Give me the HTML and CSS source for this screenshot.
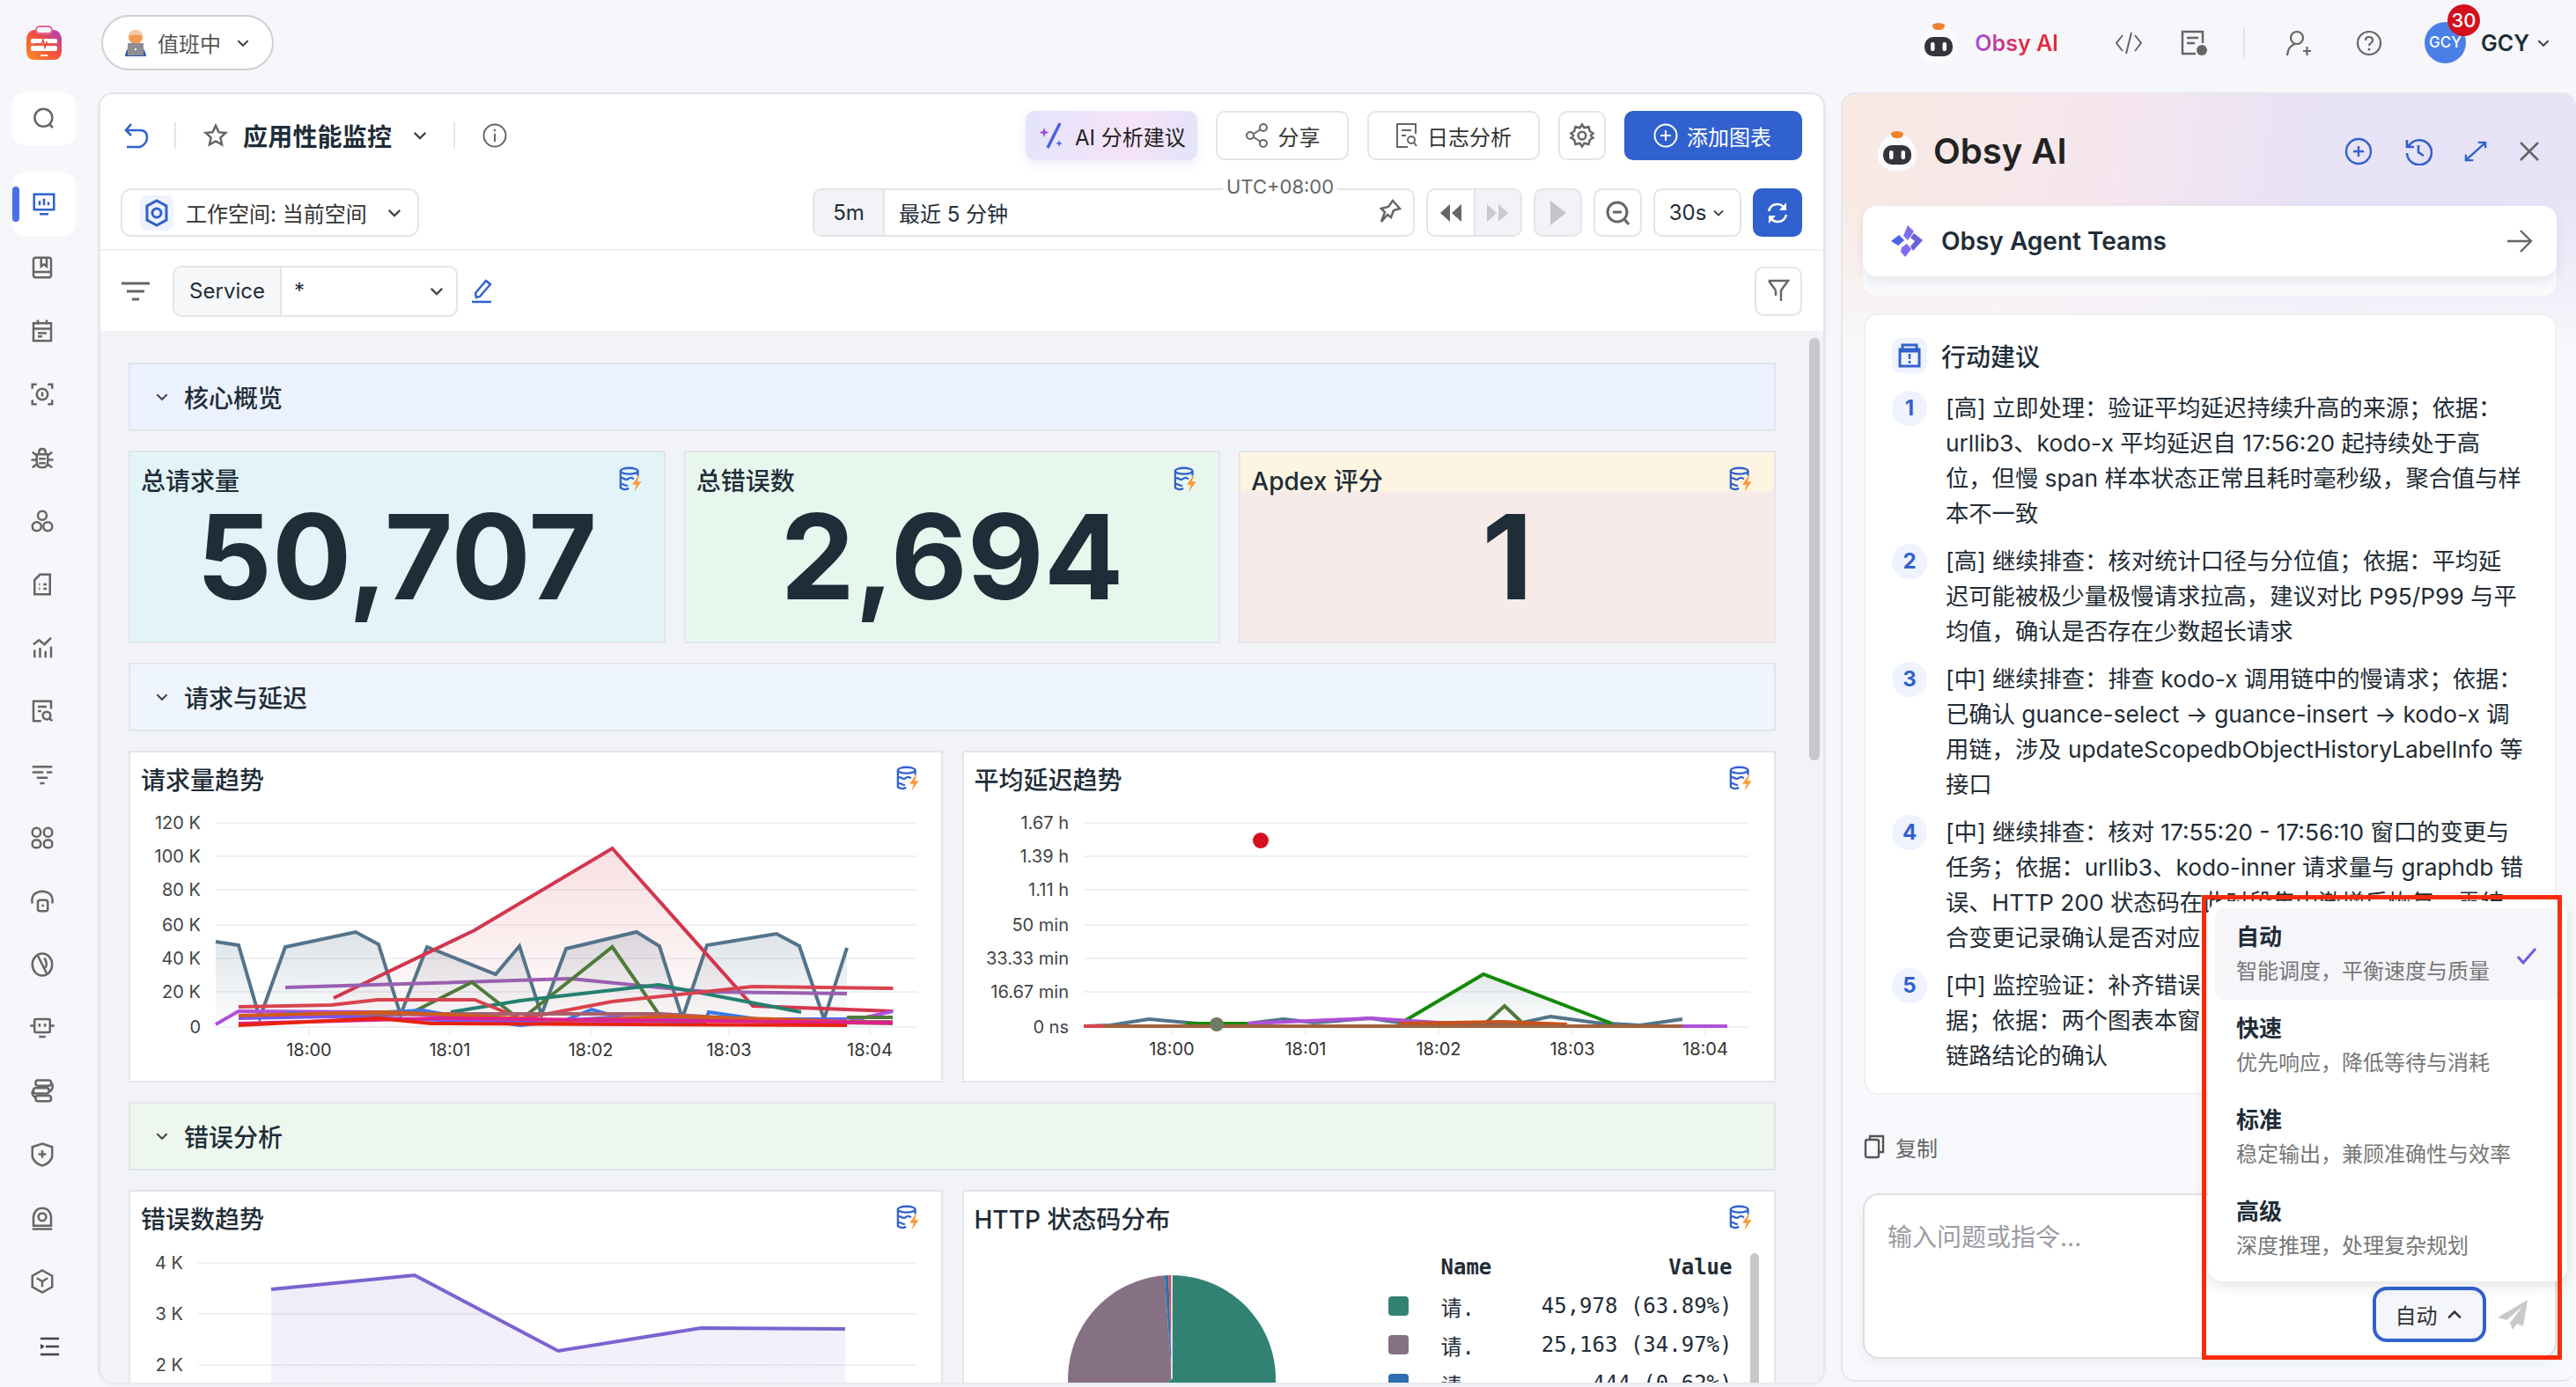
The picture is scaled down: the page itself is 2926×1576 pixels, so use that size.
FILE: index.html
```html
<!DOCTYPE html>
<html lang="zh">
<head>
  <meta charset="UTF-8" />
  <title>应用性能监控</title>
  <link rel="stylesheet" href="styles.css">
</head>
<body>
  <svg class="sprites" width="0" height="0">
    <defs>
      <linearGradient id="logoGrad" x1="0" y1="1" x2="1" y2="0">
        <stop offset="0" stop-color="#ff8a1f"/><stop offset=".55" stop-color="#f0503c"/><stop offset="1" stop-color="#a63fc9"/>
      </linearGradient>
      <symbol id="chev" viewBox="0 0 16 16"><path d="M3 5.500l5 5 5-5" fill="none" stroke="currentColor" stroke-width="1.800"/></symbol>
      <symbol id="ds" viewBox="0 0 26 26">
        <ellipse cx="11" cy="4.500" rx="8.500" ry="3" fill="none" stroke="#3161cf" stroke-width="2"/>
        <path d="M2.500 4.500V21q4 3 8 .5M19.500 4.500V9M2.500 12c3-2.500 4 2.500 7 .5s4-1.500 6 0M2.500 18c3-2.500 4 2.500 7 .5" fill="none" stroke="#3161cf" stroke-width="2"/>
        <path d="M20 9l-6 9h4l-2 7 7-10h-4l2-6z" fill="#fb9a3c"/>
      </symbol>
      <symbol id="mascot" viewBox="0 0 48 48">
        <path d="M24 4C11 4 2 16 2 30c0 11 10 16 22 16s22-5 22-16C46 16 37 4 24 4z" fill="#fbfbfd"/>
        <path d="M17 3q7-4 14 0c0 5-3 6-7 6s-7-1-7-6z" fill="#f2812c"/>
        <rect x="8" y="17" width="32" height="22" rx="10" fill="#34343a"/>
        <rect x="15" y="23" width="4.500" height="10" rx="2" fill="#fff"/>
        <rect x="28.500" y="23" width="4.500" height="10" rx="2" fill="#fff"/>
      </symbol>
    </defs>
  </svg>

  <header class="topbar">
    <div class="top-left">
      <svg class="logo" width="40" height="40" viewBox="0 0 40 40">
        <path d="M8 5h24q8 2 8 12v12q0 10-10 10H10Q0 39 0 29V17Q0 7 8 5z" fill="url(#logoGrad)"/>
        <rect x="11" y="1" width="18" height="8" rx="4" fill="#f7f7fb" stroke="#e8669a" stroke-width="2"/>
        <rect x="5" y="15" width="30" height="5.500" rx="2" fill="#fff"/>
        <rect x="5" y="23" width="30" height="6" rx="2" fill="#fff"/>
        <path d="M8 21h9l2-5 2 9 2-6 1 2h9" fill="none" stroke="#e9483b" stroke-width="1.500"/>
        <rect x="16" y="33" width="8" height="2" fill="#fff"/>
      </svg>
      <button class="status-pill">
        <svg width="30" height="30" viewBox="0 0 30 30">
          <circle cx="15" cy="8" r="8" fill="#f59a52"/>
          <path d="M7 7q2-7 8-7t8 7q-8-3-16 0z" fill="#f4c9a6"/>
          <path d="M3 30q1-9 6-10h12q5 1 6 10z" fill="#3556b0"/>
          <rect x="6" y="15" width="18" height="14" fill="#8e8e92"/>
          <circle cx="15" cy="22" r="1.300" fill="#eee"/>
        </svg>
        <span>值班中</span>
        <svg class="chev pill-chev" width="18" height="18"><use href="#chev"/></svg>
      </button>
    </div>
    <div class="top-right">
      <svg width="48" height="48"><use href="#mascot"/></svg>
      <span class="obsy-link">Obsy AI</span>
      <svg class="top-icon code-icon" width="32" height="28" viewBox="0 0 32 28"><path d="M9 5L2 14l7 9M23 5l7 9-7 9M19 2l-6 24" fill="none" stroke="#666" stroke-width="2"/></svg>
      <svg class="top-icon" width="32" height="30" viewBox="0 0 32 30"><path d="M18 27H3V2h23v13" fill="none" stroke="#666" stroke-width="2.500"/><path d="M8 9h13M8 15h9" stroke="#666" stroke-width="2.500"/><circle cx="25" cy="23" r="6" fill="#666"/></svg>
      <span class="top-divider"></span>
      <svg class="top-icon" width="30" height="30" viewBox="0 0 30 30"><circle cx="13" cy="9" r="7" fill="none" stroke="#666" stroke-width="2.200"/><path d="M2 29q1-11 9-13M20 24h9M24.500 19v10" fill="none" stroke="#666" stroke-width="2.200"/></svg>
      <svg class="top-icon help-icon" width="30" height="30" viewBox="0 0 30 30"><circle cx="15" cy="15" r="13" fill="none" stroke="#666" stroke-width="2.200"/><path d="M11 12q0-4 4-4t4 4q0 2-2 3t-2 3" fill="none" stroke="#666" stroke-width="2.200"/><circle cx="15" cy="22" r="1.500" fill="#666"/></svg>
      <div class="avatar">GCY<span class="badge">30</span></div>
      <span class="user-name">GCY</span>
      <svg class="chev user-chev" width="18" height="18"><use href="#chev"/></svg>
    </div>
  </header>

  <div class="workspace">
    <nav class="sidebar">
      <div class="nav-search">
        <svg width="30" height="30" viewBox="0 0 24 24"><circle cx="11.500" cy="11" r="8" class="ic"/><path d="M17 17l3 3" class="ic"/></svg>
      </div>
      <div class="nav-item active">
        <svg width="30" height="30" viewBox="0 0 24 24"><rect x="3" y="3" width="18" height="14" fill="none" stroke="#3161cf" stroke-width="2"/><path d="M8 9v4M12 7v6M16 10v3M8 21h8" stroke="#3161cf" stroke-width="2"/></svg>
      </div>
      <div class="nav-item"><svg width="30" height="30" viewBox="0 0 24 24"><rect x="4" y="3" width="16" height="18" rx="2" class="ic"/><path d="M4 16h16M11 3v8l2.500-2 2.500 2V3" class="ic"/></svg></div>
      <div class="nav-item"><svg width="30" height="30" viewBox="0 0 24 24"><rect x="4" y="5" width="16" height="16" class="ic"/><path d="M4 10h16M8 2v4M16 2v4M8 14h8M8 17h4" class="ic"/></svg></div>
      <div class="nav-item"><svg width="30" height="30" viewBox="0 0 24 24"><path d="M3 7V3h4M17 3h4v4M21 17v4h-4M7 21H3v-4" class="ic"/><circle cx="12" cy="12" r="5" class="ic"/><path d="M12 10v4" class="ic"/></svg></div>
      <div class="nav-item"><svg width="30" height="30" viewBox="0 0 24 24"><path d="M7 9h10v7q0 5-5 5t-5-5zM9 9V7q0-3 3-3t3 3v2M3 7l4 3M21 7l-4 3M2 14h5M17 14h5M3 21l4-3M21 21l-4-3M9 13h6M9 17h6" class="ic"/></svg></div>
      <div class="nav-item"><svg width="30" height="30" viewBox="0 0 24 24"><circle cx="12" cy="7" r="4" class="ic"/><circle cx="7" cy="17" r="4" class="ic"/><circle cx="17" cy="17" r="4" class="ic"/></svg></div>
      <div class="nav-item"><svg width="30" height="30" viewBox="0 0 24 24"><path d="M5 8l5-5h9v18H5z" class="ic"/><path d="M9 12h1M13 12h3M9 16h1M13 16h3" class="ic"/></svg></div>
      <div class="nav-item"><svg width="30" height="30" viewBox="0 0 24 24"><path d="M5 14v7M10 12v9M15 15v6M20 11v10M4 9l5-4 5 4 6-6" class="ic"/></svg></div>
      <div class="nav-item"><svg width="30" height="30" viewBox="0 0 24 24"><path d="M20 10V3H4v18h7M8 8h8M8 12h3" class="ic"/><circle cx="16" cy="16" r="3.500" class="ic"/><path d="M18.500 18.500L21 21" class="ic"/></svg></div>
      <div class="nav-item"><svg width="30" height="30" viewBox="0 0 24 24"><path d="M3 5h18M3 10h10M16 10h5M7 15h10M10 20h4" class="ic"/></svg></div>
      <div class="nav-item"><svg width="30" height="30" viewBox="0 0 24 24"><rect x="3" y="3" width="7.500" height="8" rx="3.700" class="ic"/><rect x="13.500" y="3" width="7.500" height="8" rx="3.700" class="ic"/><rect x="3" y="14" width="7.500" height="7" rx="3" class="ic"/><rect x="13.500" y="14" width="7.500" height="7" rx="3" class="ic"/></svg></div>
      <div class="nav-item"><svg width="30" height="30" viewBox="0 0 24 24"><path d="M3 14q-2-10 9-11 11 1 9 11" class="ic"/><rect x="8" y="11" width="9" height="10" rx="2" class="ic"/><path d="M12.500 15v2" class="ic"/></svg></div>
      <div class="nav-item"><svg width="30" height="30" viewBox="0 0 24 24"><ellipse cx="12" cy="12" rx="9" ry="10" class="ic"/><path d="M8 4l8 16M14 6q3 5 1 9" class="ic"/></svg></div>
      <div class="nav-item"><svg width="30" height="30" viewBox="0 0 24 24"><rect x="5" y="4" width="14" height="12" rx="1" class="ic"/><path d="M1 10h4M19 10h4M9 20h6M9.500 8v3M14.500 8v3" class="ic"/></svg></div>
      <div class="nav-item"><svg width="30" height="30" viewBox="0 0 24 24"><rect x="6" y="2" width="14" height="5" rx="2" class="ic"/><rect x="4" y="9" width="14" height="5" rx="2" class="ic"/><rect x="6" y="16" width="14" height="5" rx="2" class="ic"/><path d="M20 4.500q3 2 0 7h-2M4 11q-3 3 2 7" class="ic"/></svg></div>
      <div class="nav-item"><svg width="30" height="30" viewBox="0 0 24 24"><path d="M12 2l9 3v9q-2 6-9 8-7-2-9-8V5z" class="ic"/><path d="M12 8v7M8.500 11.500h7" class="ic"/></svg></div>
      <div class="nav-item"><svg width="30" height="30" viewBox="0 0 24 24"><path d="M4 19v-8q1-8 8-8t8 8v8z" class="ic"/><circle cx="12" cy="11" r="3.500" class="ic"/><path d="M3 22h18" class="ic"/></svg></div>
      <div class="nav-item"><svg width="30" height="30" viewBox="0 0 24 24"><path d="M12 2l9 5v10l-9 5-9-5V7z" class="ic"/><path d="M7 9l5 3 5-3M12 12v5" class="ic"/></svg></div>
      <svg class="nav-collapse" width="24" height="24" viewBox="0 0 24 24"><path d="M2 3h21M8 12h15M2 21h21" stroke="#444" stroke-width="2.400"/><path d="M2 9l5 3-5 3z" fill="#444"/></svg>
    </nav>

    <main class="board">
      <div class="board-head">
        <div class="head-row title-row">
          <div class="title-left">
            <svg width="30" height="30" viewBox="0 0 30 30"><path d="M9 2L3 9l6 6M3 9h16q8 0 8 8t-8 11H4" fill="none" stroke="#3161cf" stroke-width="2.500"/></svg>
            <span class="vline"></span>
            <svg class="star" width="30" height="30" viewBox="0 0 24 24"><path d="M12 3l2.700 5.900 6.300.7-4.700 4.300 1.300 6.400L12 17.100l-5.600 3.200 1.300-6.400L3 9.600l6.300-.7z" class="ic"/></svg>
            <h1>应用性能监控</h1>
            <svg class="chev" width="20" height="20"><use href="#chev"/></svg>
            <span class="vline"></span>
            <svg width="28" height="28" viewBox="0 0 28 28"><circle cx="14" cy="14" r="12.500" fill="none" stroke="#666" stroke-width="2"/><path d="M14 12v9" stroke="#666" stroke-width="2"/><circle cx="14" cy="8" r="1.300" fill="#666"/></svg>
          </div>
          <div class="title-actions">
            <button class="btn ai-btn">
              <svg width="30" height="34" viewBox="0 0 30 34"><path d="M23 3L9 31" stroke="#4d5fe0" stroke-width="3.500"/><path d="M5 8l1.500 4 4 1.500-4 1.500L5 19l-1.500-4-4-1.500 4-1.500z" fill="#a24fd8"/><path d="M22 22l1 3 3 1-3 1-1 3-1-3-3-1 3-1z" fill="#4d5fe0"/></svg>
              AI 分析建议
            </button>
            <button class="btn share-btn">
              <svg width="28" height="30" viewBox="0 0 28 30"><circle cx="21" cy="6" r="4" class="ic"/><circle cx="6" cy="15" r="4" class="ic"/><circle cx="21" cy="24" r="4" class="ic"/><path d="M10 13l8-5M10 17l8 5" class="ic"/></svg>
              分享
            </button>
            <button class="btn log-btn">
              <svg width="26" height="32" viewBox="0 0 26 32"><path d="M14 29H2V3h21v11M7 10h11M7 16h5" class="ic"/><circle cx="18" cy="21" r="4" class="ic"/><path d="M21 24l3 4" class="ic"/></svg>
              日志分析
            </button>
            <button class="btn icon-btn">
              <svg width="30" height="30" viewBox="0 0 24 24"><path d="M12 2l2 3 4-1 1 4 3 2-2 2 2 2-3 2-1 4-4-1-2 3-2-3-4 1-1-4-3-2 2-2-2-2 3-2 1-4 4 1z" class="ic"/><circle cx="12" cy="12" r="3.500" class="ic"/></svg>
            </button>
            <button class="btn primary-btn">
              <svg width="28" height="28" viewBox="0 0 28 28"><circle cx="14" cy="14" r="12.500" fill="none" stroke="#fff" stroke-width="2"/><path d="M14 8v12M8 14h12" stroke="#fff" stroke-width="2"/></svg>
              添加图表
            </button>
          </div>
        </div>

        <div class="head-row time-row">
          <button class="ws-select">
            <span class="ws-icon">
              <svg width="28" height="32" viewBox="0 0 28 32"><path d="M14 2l11 6v16l-11 6-11-6V8z" fill="none" stroke="#3161cf" stroke-width="3"/><circle cx="14" cy="16" r="5" fill="none" stroke="#3161cf" stroke-width="3"/></svg>
            </span>
            <span>工作空间: 当前空间</span>
            <svg class="chev" width="20" height="20"><use href="#chev"/></svg>
          </button>
          <div class="time-tools">
            <div class="time-range">
              <span class="time-quick">5m</span>
              <span class="time-text">最近 5 分钟</span>
              <span class="utc">UTC+08:00</span>
              <svg width="30" height="32" viewBox="0 0 30 32"><path d="M19 2l8 9-7 2-3 8-4-3-7 8 4-11-4-4 8-2z" fill="none" stroke="#666" stroke-width="2.500"/></svg>
            </div>
            <div class="tool-group">
              <span class="tool"><svg width="26" height="22" viewBox="0 0 26 22"><path d="M12 1L1 11l11 10zM25 1L14 11l11 10z" fill="#666"/></svg></span>
              <span class="tool off"><svg width="26" height="22" viewBox="0 0 26 22"><path d="M1 1l11 10L1 21zM14 1l11 10-11 10z" fill="#c9cacd"/></svg></span>
            </div>
            <span class="tool-box off"><svg width="20" height="30" viewBox="0 0 20 30"><path d="M1 1l18 14L1 29z" fill="#c4c5c8"/></svg></span>
            <span class="tool-box"><svg width="30" height="32" viewBox="0 0 30 32"><circle cx="14" cy="15" r="11" fill="none" stroke="#666" stroke-width="3"/><path d="M9 15h10M22 23l5 6" stroke="#666" stroke-width="3"/></svg></span>
            <span class="tool-box interval">30s <svg class="chev" width="16" height="16"><use href="#chev"/></svg></span>
            <span class="refresh"><svg width="26" height="28" viewBox="0 0 26 28"><path d="M3 12q2-8 10-8 5 0 8 5M23 16q-2 8-10 8-5 0-8-5" fill="none" stroke="#fff" stroke-width="2.600"/><path d="M23 2v9h-8zM3 26v-9h8z" fill="#fff"/></svg></span>
          </div>
        </div>

        <div class="filter-row">
          <svg width="34" height="24" viewBox="0 0 34 24"><path d="M1 3h32M7 12h20M13 21h8" stroke="#666" stroke-width="3"/></svg>
          <div class="filter-group">
            <span class="filter-key">Service</span>
            <span class="filter-val">*</span>
            <svg class="chev" width="20" height="20"><use href="#chev"/></svg>
          </div>
          <svg width="26" height="28" viewBox="0 0 26 28"><path d="M7 21l-1-5L18 2l5 4-12 14zM2 26h22" fill="none" stroke="#3161cf" stroke-width="2.500"/></svg>
          <button class="btn icon-btn funnel">
            <svg width="26" height="30" viewBox="0 0 26 30"><path d="M2 3h22l-8 11v12M10 14v6M2 3l8 11" fill="none" stroke="#666" stroke-width="2.400"/></svg>
          </button>
        </div>
      </div>

      <div class="dash">
        <section class="group-bar blue-bar"><svg class="chev" width="18" height="18"><use href="#chev"/></svg>核心概览</section>

        <div class="stat-row">
          <article class="stat-card stat-cyan">
            <div class="card-head"><h3>总请求量</h3><svg width="30" height="30"><use href="#ds"/></svg></div>
            <div class="stat-value">50,707</div>
          </article>
          <article class="stat-card stat-green">
            <div class="card-head"><h3>总错误数</h3><svg width="30" height="30"><use href="#ds"/></svg></div>
            <div class="stat-value">2,694</div>
          </article>
          <article class="stat-card stat-warn">
            <div class="card-head"><h3>Apdex 评分</h3><svg width="30" height="30"><use href="#ds"/></svg></div>
            <div class="stat-value">1</div>
          </article>
        </div>

        <section class="group-bar blue-bar light"><svg class="chev" width="18" height="18"><use href="#chev"/></svg>请求与延迟</section>

        <div class="chart-row">
          <article class="chart-card">
            <div class="card-head"><h3>请求量趋势</h3><svg width="30" height="30"><use href="#ds"/></svg></div>
            <svg class="plot" viewBox="148 915 920 313" width="920" height="313">
              <defs>
                <linearGradient id="fillRed" x1="0" y1="0" x2="0" y2="1"><stop offset="0" stop-color="#d9434e" stop-opacity=".16"/><stop offset="1" stop-color="#d9434e" stop-opacity=".02"/></linearGradient>
                <linearGradient id="fillSlate" x1="0" y1="0" x2="0" y2="1"><stop offset="0" stop-color="#53748a" stop-opacity=".2"/><stop offset="1" stop-color="#53748a" stop-opacity=".01"/></linearGradient>
              </defs>
              <g class="grid"><path d="M245 935H1042M245 973H1042M245 1011H1042M245 1051H1042M245 1089H1042M245 1127H1042M245 1167H1042"/><path d="M351 1167v9M511 1167v9M671 1167v9M828 1167v9M988 1167v9"/></g>
              <g class="axis-y">
                <text x="228" y="942">120 K</text><text x="228" y="980">100 K</text><text x="228" y="1018">80 K</text><text x="228" y="1058">60 K</text><text x="228" y="1096">40 K</text><text x="228" y="1134">20 K</text><text x="228" y="1174">0</text>
              </g>
              <g class="axis-x">
                <text x="351" y="1200">18:00</text><text x="511" y="1200">18:01</text><text x="671" y="1200">18:02</text><text x="828" y="1200">18:03</text><text x="988" y="1200">18:04</text>
              </g>
              <path d="M379 1134L539 1057 695.500 964 855 1143 1014.500 1149V1167H379z" fill="url(#fillRed)"/>
              <path d="M245 1070L271 1074 295 1157 324 1076 404 1059 430 1073 455 1153 485 1076 563 1107 590 1075 615 1153 643 1078 723 1059 749 1075 775 1157 803 1074 882 1061 908 1075 936 1158 962 1077V1167H245z" fill="url(#fillSlate)"/>
              <g class="series">
                <polyline stroke="#53748a" points="245,1070 271,1074 295,1157 324,1076 404,1059 430,1073 455,1153 485,1076 563,1107 590,1075 615,1153 643,1078 723,1059 749,1075 775,1157 803,1074 882,1061 908,1075 936,1158 962,1077"/>
                <polyline stroke="#d4354f" points="379,1134 539,1057 695.500,964 855,1143 1014.500,1149"/>
                <polyline stroke="#9a5fb0" points="324,1122 491,1117 648,1112 748,1122 805,1127 962,1129"/>
                <polyline stroke="#4f7a3a" points="465,1152 536,1116 586,1155"/>
                <polyline stroke="#4f7a3a" points="596,1155 695.500,1076 748,1152 774,1157"/>
                <polyline stroke="#23806f" points="512,1150 591,1137 748,1119 910,1150"/>
                <polyline stroke="#d9434e" points="271,1144 376,1142 429,1136 539,1136 591,1157 622,1152 695.500,1138 800,1127 855,1121 1014.500,1123"/>
                <polyline stroke="#b04fd8" points="245,1164 271,1149 430,1150 591,1160 780,1160 962,1161 1014,1149"/>
                <polyline stroke="#3a78e8" points="325,1151 376,1153 480,1148 520,1155 591,1165 640,1160 672,1147 710,1158 800,1163 805,1150 860,1158 962,1158"/>
                <polyline stroke="#4f7a3a" points="962,1156 1014,1156"/>
                <polyline stroke="#8a7a5a" stroke-width="6" points="962,1161 1014,1161"/>
                <polyline stroke="#a85f6a" stroke-width="6" points="271,1156 500,1152 750,1152 900,1161 1014,1163"/>
                <polyline stroke="#7b55f0" stroke-width="6" points="271,1157 376,1155 500,1159 620,1161 695,1156 780,1158 962,1159"/>
                <polyline stroke="#d2591b" stroke-width="6" points="271,1154 440,1150 490,1152 640,1160 760,1155 880,1158 962,1161"/>
                <polyline stroke="#e0208a" stroke-width="6" points="271,1163 500,1157 680,1159 1014,1162"/>
                <polyline stroke="#e8220f" stroke-width="6" points="271,1165 430,1157 490,1163 962,1165"/>
              </g>
            </svg>
          </article>
          <article class="chart-card">
            <div class="card-head"><h3>平均延迟趋势</h3><svg width="30" height="30"><use href="#ds"/></svg></div>
            <svg class="plot" viewBox="1096 915 920 313" width="920" height="313">
              <defs>
                <linearGradient id="fillPeak" x1="0" y1="0" x2="0" y2="1"><stop offset="0" stop-color="#53748a" stop-opacity=".16"/><stop offset="1" stop-color="#53748a" stop-opacity=".02"/></linearGradient>
              </defs>
              <g class="grid"><path d="M1232 935H1988M1232 973H1988M1232 1011H1988M1232 1051H1988M1232 1089H1988M1232 1127H1988M1232 1167H1988"/><path d="M1332 1167v9M1484 1167v9M1635 1167v9M1787 1167v9M1938 1167v9"/></g>
              <g class="axis-y">
                <text x="1215" y="942">1.67 h</text><text x="1215" y="980">1.39 h</text><text x="1215" y="1018">1.11 h</text><text x="1215" y="1058">50 min</text><text x="1215" y="1096">33.33 min</text><text x="1215" y="1134">16.67 min</text><text x="1215" y="1174">0 ns</text>
              </g>
              <g class="axis-x">
                <text x="1332" y="1199">18:00</text><text x="1484" y="1199">18:01</text><text x="1635" y="1199">18:02</text><text x="1787" y="1199">18:03</text><text x="1938" y="1199">18:04</text>
              </g>
              <path d="M1593 1162L1686 1107 1832 1163z" fill="url(#fillPeak)"/>
              <g class="series">
                <polyline stroke="#53748a" points="1232,1166 1262,1165 1306,1158 1361,1163 1418,1163 1459,1158 1494,1162 1558,1157 1590,1162 1686,1163 1730,1162 1762,1155 1813,1162 1864,1165 1912,1158"/>
                <polyline stroke="#138a07" points="1593,1162 1686,1107 1832,1163"/>
                <polyline stroke="#138a07" points="1348,1163 1418,1163"/>
                <polyline stroke="#4f7a3a" points="1689,1162 1710,1143 1730,1162"/>
                <polyline stroke="#b04fd8" points="1418,1163 1558,1157 1635,1162"/>
                <polyline stroke="#b04fd8" stroke-width="6" points="1912,1166 1963,1166"/>
                <polyline stroke="#d9434e" stroke-width="6" points="1232,1166 1256,1166"/>
                <polyline stroke="#c9521a" points="1590,1163 1708,1161 1781,1164"/>
                <polyline stroke="#a0623e" stroke-width="6" points="1256,1166 1912,1166"/>
              </g>
              <circle cx="1433" cy="955" r="9" fill="#d60f1e"/>
              <circle cx="1383" cy="1164" r="8" fill="#6f7a62"/>
            </svg>
          </article>
        </div>

        <section class="group-bar green-bar"><svg class="chev" width="18" height="18"><use href="#chev"/></svg>错误分析</section>

        <div class="chart-row">
          <article class="chart-card">
            <div class="card-head"><h3>错误数趋势</h3><svg width="30" height="30"><use href="#ds"/></svg></div>
            <svg class="plot" viewBox="148 1414 920 313" width="920" height="313">
              <defs>
                <linearGradient id="fillViolet" x1="0" y1="0" x2="0" y2="1"><stop offset="0" stop-color="#7b63d0" stop-opacity=".12"/><stop offset="1" stop-color="#7b63d0" stop-opacity=".04"/></linearGradient>
              </defs>
              <g class="grid"><path d="M225 1435H1041M225 1493H1041M225 1551H1041"/></g>
              <g class="axis-y"><text x="208" y="1442">4 K</text><text x="208" y="1500">3 K</text><text x="208" y="1558">2 K</text></g>
              <path d="M308 1465L471 1449 634 1535 796 1509 960 1510V1728H308z" fill="url(#fillViolet)"/>
              <polyline class="line-one" stroke="#7b63d0" points="308,1465 471,1449 634,1535 796,1509 960,1510"/>
            </svg>
          </article>
          <article class="chart-card">
            <div class="card-head"><h3>HTTP 状态码分布</h3><svg width="30" height="30"><use href="#ds"/></svg></div>
            <div class="pie-body">
              <svg class="pie" viewBox="1094 1414 460 313" width="460" height="313">
                <path d="M1330 1567V1449A118 118 0 1 1 1239.600 1642.800z" fill="#328273"/>
                <path d="M1330 1567L1239.600 1642.800A118 118 0 0 1 1321.800 1449.300z" fill="#857183"/>
                <path d="M1330 1567L1321.800 1449.300A118 118 0 0 1 1326.300 1449.100z" fill="#2f6fb0"/>
                <path d="M1330 1567L1326.300 1449.100A118 118 0 0 1 1330 1449z" fill="#c8505e"/>
                <path d="M1330 1567V1449" stroke="#fff" stroke-width="1.500"/>
              </svg>
              <div class="legend">
                <div class="legend-row legend-head"><i></i><b>Name</b><b class="legend-num">Value</b></div>
                <div class="legend-row"><i class="sw-teal"></i><span>请.</span><span class="legend-num">45,978 (63.89%)</span></div>
                <div class="legend-row"><i class="sw-mauve"></i><span>请.</span><span class="legend-num">25,163 (34.97%)</span></div>
                <div class="legend-row"><i class="sw-blue"></i><span>请.</span><span class="legend-num">444 (0.62%)</span></div>
              </div>
              <span class="legend-bar"></span>
            </div>
          </article>
        </div>
        <span class="dash-scroll"></span>
      </div>
    </main>

    <aside class="assistant">
      <div class="assist-head">
        <svg width="48" height="48"><use href="#mascot"/></svg>
        <h2>Obsy AI</h2>
        <div class="assist-tools">
          <svg width="32" height="32" viewBox="0 0 32 32"><circle cx="16" cy="16" r="14" fill="none" stroke="#3161cf" stroke-width="2.400"/><path d="M16 10v12M10 16h12" stroke="#3161cf" stroke-width="2.400"/></svg>
          <svg width="32" height="32" viewBox="0 0 32 32"><path d="M5 10a14 14 0 1 1-2 8M3 3v8h8M16 9v8l6 4" fill="none" stroke="#3161cf" stroke-width="2.600"/></svg>
          <svg width="26" height="24" viewBox="0 0 28 26"><path d="M17 2h9v7M11 24H2v-7M25 3L3 23" fill="none" stroke="#3161cf" stroke-width="2.600"/></svg>
          <svg width="24" height="24" viewBox="0 0 24 24"><path d="M2 2l20 20M22 2L2 22" stroke="#666" stroke-width="2.600"/></svg>
        </div>
      </div>

      <div class="agent-wrap">
        <div class="agent-card">
          <svg width="38" height="38" viewBox="0 0 38 38"><path d="M20 1l7 7-7 10-5-5z" fill="#7f6cf0"/><path d="M27 10l10 8-11 12-3-5 5-6-5-4z" fill="#6a5fdc"/><path d="M10 12l6 6-7 6-8-5z" fill="#4f63e8"/><path d="M13 26l6-4 5 6-7 9-5-6z" fill="#7f6cf0"/></svg>
          <span class="agent-name">Obsy Agent Teams</span>
          <svg class="agent-arrow" width="30" height="30" viewBox="0 0 30 30"><path d="M1 15h27M16 3l12 12-12 12" fill="none" stroke="#666" stroke-width="2.400"/></svg>
        </div>
      </div>

      <div class="advice-card">
        <div class="advice-title">
          <span class="advice-icon"><svg width="26" height="28" viewBox="0 0 26 28"><path d="M5 6V2h16v4M2 7h22v19H2z" fill="none" stroke="#3161cf" stroke-width="3"/><path d="M2 9h22" stroke="#3161cf" stroke-width="3"/><path d="M13 12v6M13 20v3" stroke="#3161cf" stroke-width="2.600"/></svg></span>
          <h4>行动建议</h4>
        </div>
        <ol class="advice-list">
          <li><span class="num">1</span><p>[高] 立即处理：验证平均延迟持续升高的来源；依据：<br>urllib3、kodo-x 平均延迟自 17:56:20 起持续处于高<br>位，但慢 span 样本状态正常且耗时毫秒级，聚合值与样<br>本不一致</p></li>
          <li><span class="num">2</span><p>[高] 继续排查：核对统计口径与分位值；依据：平均延<br>迟可能被极少量极慢请求拉高，建议对比 P95/P99 与平<br>均值，确认是否存在少数超长请求</p></li>
          <li><span class="num">3</span><p>[中] 继续排查：排查 kodo-x 调用链中的慢请求；依据：<br>已确认 guance-select → guance-insert → kodo-x 调<br>用链，涉及 updateScopedbObjectHistoryLabelInfo 等<br>接口</p></li>
          <li><span class="num">4</span><p>[中] 继续排查：核对 17:55:20 - 17:56:10 窗口的变更与<br>任务；依据：urllib3、kodo-inner 请求量与 graphdb 错<br>误、HTTP 200 状态码在此时段集中激增后恢复，需结<br>合变更记录确认是否对应</p></li>
          <li><span class="num">5</span><p>[中] 监控验证：补齐错误<br>据；依据：两个图表本窗<br>链路结论的确认</p></li>
        </ol>
      </div>

      <div class="copy-row">
        <svg width="24" height="28" viewBox="0 0 24 28"><rect x="2" y="6" width="15" height="20" rx="2" fill="none" stroke="#555" stroke-width="2.400"/><path d="M7 6V2h15v18h-5" fill="none" stroke="#555" stroke-width="2.400"/></svg>
        复制
      </div>

      <div class="prompt-box">
        <div class="placeholder">输入问题或指令...</div>
        <div class="prompt-foot">
          <button class="mode-btn">自动 <svg class="chev flip" width="22" height="22"><use href="#chev"/></svg></button>
          <svg width="36" height="36" viewBox="0 0 36 36"><path d="M35 1L1 21l10 3 18-15-14 18 3 8 5-7 7 3z" fill="#c8c9cc"/></svg>
        </div>
      </div>

      <div class="mode-menu">
        <div class="mode-option selected">
          <strong>自动</strong><span>智能调度，平衡速度与质量</span>
          <svg class="mode-check" width="24" height="20" viewBox="0 0 24 20"><path d="M2 11l6 7L22 2" fill="none" stroke="#6a5fdc" stroke-width="3"/></svg>
        </div>
        <div class="mode-option"><strong>快速</strong><span>优先响应，降低等待与消耗</span></div>
        <div class="mode-option"><strong>标准</strong><span>稳定输出，兼顾准确性与效率</span></div>
        <div class="mode-option"><strong>高级</strong><span>深度推理，处理复杂规划</span></div>
      </div>
      <div class="mark-box"></div>
    </aside>
  </div>
</body>
</html>
```

FILE: styles.css
```css
* {
  box-sizing: border-box;
}

html, body {
  margin: 0;
  height: 100%;
}

body {
  width: 2926px;
  height: 1576px;
  overflow: hidden;
  background: #f7f7fb;
  font-family: Inter, "Noto Sans CJK SC", sans-serif;
  color: #1f2d38;
  font-size: 24px;
}

h1, h2, h3, h4, p, ol {
  margin: 0;
  padding: 0;
}

button {
  font: inherit;
  color: inherit;
}

.sprites {
  position: absolute;
}

.ic {
  fill: none;
  stroke: #666;
  stroke-width: 2;
}

.chev {
  color: #444;
  flex: none;
}

.flip {
  transform: rotate(180deg);
}

/* top bar */
.topbar {
  height: 105px;
  display: flex;
  align-items: center;
  justify-content: space-between;
  padding: 0 28px 8px 30px;
}

.top-left {
  display: flex;
  align-items: center;
  gap: 45px;
}

.status-pill {
  height: 63px;
  width: 196px;
  display: flex;
  align-items: center;
  gap: 10px;
  padding: 0 22px;
  background: #fff;
  border: 2px solid #cfd0d3;
  border-radius: 32px;
  color: #555;
}

.pill-chev {
  margin-left: 6px;
}

.top-right {
  display: flex;
  align-items: center;
}

.obsy-link {
  margin-left: 17px;
  font-size: 25px;
  font-weight: 600;
  background: linear-gradient(90deg, #a54fe0, #e8283a 65%);
  -webkit-background-clip: text;
  background-clip: text;
  color: transparent;
}

.code-icon {
  margin-left: 64px;
}

.top-icon + .top-icon {
  margin-left: 42px;
}

.top-divider {
  width: 2px;
  height: 36px;
  margin: 0 46px 0 40px;
  background: #e2e3e8;
}

.top-divider + .top-icon {
  margin-left: 0;
}

.top-icon.help-icon {
  margin-left: 50px;
}

.avatar {
  position: relative;
  width: 47px;
  height: 47px;
  margin-left: 48px;
  border-radius: 50%;
  background: #4a7fe8;
  color: #fff;
  font-size: 17px;
  font-weight: 500;
  line-height: 47px;
  text-align: center;
}

.badge {
  position: absolute;
  left: 26px;
  top: -20px;
  width: 37px;
  height: 36px;
  border-radius: 50%;
  background: #d40f1e;
  font-size: 22px;
  line-height: 36px;
}

.user-name {
  margin-left: 17px;
  font-weight: 600;
  font-size: 25px;
}

.user-chev {
  margin-left: 7px;
}

/* shell */
.workspace {
  display: flex;
  height: 1466px;
}

.sidebar {
  width: 112px;
  flex: none;
  margin-top: -2px;
}

.nav-search {
  width: 72px;
  height: 60px;
  margin: 2px 0 31px 14px;
  display: flex;
  align-items: center;
  justify-content: center;
  background: #fff;
  border-radius: 14px;
}

.nav-item {
  position: relative;
  width: 72px;
  height: 72px;
  margin-left: 12px;
  display: flex;
  align-items: center;
  justify-content: center;
}

.nav-item.active {
  margin-left: 14px;
  background: #fff;
  border-radius: 14px;
}

.nav-item.active::before {
  content: "";
  position: absolute;
  left: 0;
  top: 16px;
  width: 8px;
  height: 40px;
  border-radius: 4px;
  background: #4a6fe8;
}

.nav-collapse {
  display: block;
  margin: 26px 0 0 44px;
}

/* dashboard */
.board {
  width: 1961px;
  flex: none;
  display: flex;
  flex-direction: column;
  background: #fff;
  border: 2px solid #e4e5ea;
  border-bottom-width: 0;
  border-radius: 16px;
  overflow: hidden;
  height: 1466px;
  box-shadow: 0 2px 4px rgba(0, 0, 0, .08);
}

.board-head {
  flex: none;
}

.head-row {
  display: flex;
  align-items: center;
  justify-content: space-between;
  padding: 0 24px 0 26px;
}

.title-row {
  margin-top: 19px;
  height: 56px;
}

.title-left {
  display: flex;
  align-items: center;
}

.vline {
  width: 2px;
  height: 30px;
  margin: 0 28px;
  background: #e4e5ea;
}

.star {
  margin-left: 2px;
}

h1 {
  margin: 0 22px 0 16px;
  font-size: 28px;
  font-weight: 600;
  letter-spacing: .2px;
}

.title-left h1 + .chev + .vline {
  margin: 0 31px 0 28px;
}

.title-actions {
  display: flex;
  gap: 21px;
}

.btn {
  height: 56px;
  padding: 0;
  display: flex;
  align-items: center;
  justify-content: center;
  gap: 10px;
  background: #fff;
  border: 2px solid #e4e5ea;
  border-radius: 10px;
  color: #333;
}

.ai-btn {
  width: 195px;
  padding: 0 0 0 16px;
  justify-content: flex-start;
  gap: 10px;
  border: 0;
  background: linear-gradient(100deg, #e3e4fb, #f6e3f9 62%, #e2e3f8);
  box-shadow: 0 4px 12px rgba(120, 120, 220, .14);
  color: #222;
}

.share-btn {
  width: 151px;
}

.log-btn {
  width: 196px;
}

.icon-btn {
  width: 54px;
}

.primary-btn {
  width: 202px;
  padding: 0 0 0 33px;
  justify-content: flex-start;
  background: #3161cf;
  border: 0;
  color: #fff;
}

.time-row {
  margin-top: 32px;
  height: 55px;
  padding-left: 23px;
}

.ws-select {
  width: 339px;
  height: 55px;
  display: flex;
  align-items: center;
  padding: 0 16px 0 20px;
  background: #fff;
  border: 2px solid #e4e5ea;
  border-radius: 12px;
  color: #333;
  white-space: nowrap;
}

.ws-icon {
  width: 38px;
  height: 40px;
  margin-right: 14px;
  display: flex;
  align-items: center;
  justify-content: center;
  background: #eef3fe;
  border-radius: 8px;
}

.ws-select .chev {
  margin-left: auto;
}

.time-tools {
  display: flex;
  align-items: center;
  gap: 13px;
}

.time-range {
  position: relative;
  width: 684px;
  height: 55px;
  display: flex;
  align-items: center;
  background: #fff;
  border: 2px solid #e4e5ea;
  border-radius: 10px;
}

.time-quick {
  width: 80px;
  height: 100%;
  display: flex;
  align-items: center;
  justify-content: center;
  background: #f2f3f6;
  border-right: 2px solid #e4e5ea;
  border-radius: 8px 0 0 8px;
}

.time-text {
  margin-left: 16px;
  flex: 1;
}

.time-range svg {
  margin-right: 12px;
}

.utc {
  position: absolute;
  left: 464px;
  top: -18px;
  padding: 0 4px;
  background: #fff;
  color: #666;
  font-size: 22px;
  line-height: 28px;
}

.tool-group {
  width: 109px;
  height: 55px;
  display: flex;
  border: 2px solid #e4e5ea;
  border-radius: 10px;
  overflow: hidden;
}

.tool {
  flex: 1;
  display: flex;
  align-items: center;
  justify-content: center;
}

.tool.off {
  background: #f2f3f6;
  border-left: 2px solid #e4e5ea;
}

.tool-box {
  width: 55px;
  height: 55px;
  display: flex;
  align-items: center;
  justify-content: center;
  background: #fff;
  border: 2px solid #e4e5ea;
  border-radius: 10px;
}

.tool-box.off {
  background: #f2f3f6;
}

.tool-box.interval {
  width: 100px;
  gap: 6px;
}

.refresh {
  width: 56px;
  height: 55px;
  display: flex;
  align-items: center;
  justify-content: center;
  background: #3161cf;
  border-radius: 10px;
}

.filter-row {
  margin-top: 14px;
  height: 93px;
  display: flex;
  align-items: center;
  gap: 14px;
  padding: 0 24px 0 23px;
  border-top: 2px solid #f0f1f4;
}

.filter-group {
  width: 324px;
  height: 58px;
  margin-left: 11px;
  display: flex;
  align-items: center;
  background: #fff;
  border: 2px solid #e4e5ea;
  border-radius: 10px;
  overflow: hidden;
  padding-right: 12px;
}

.filter-key {
  width: 122px;
  height: 100%;
  display: flex;
  align-items: center;
  justify-content: center;
  background: #f6f7f9;
  border-right: 2px solid #e4e5ea;
}

.filter-val {
  flex: 1;
  padding-left: 14px;
}

.funnel {
  margin-left: auto;
}

/* dash area */
.dash {
  position: relative;
  flex: 1;
  min-height: 0;
  overflow: hidden;
  display: flex;
  flex-direction: column;
  gap: 22px;
  padding: 36px 54px 0 32px;
  background: #f2f3f7;
}

.dash-scroll {
  position: absolute;
  right: 4px;
  top: 8px;
  width: 12px;
  height: 480px;
  border-radius: 6px;
  background: #c6c7ca;
}

.group-bar {
  flex: none;
  height: 78px;
  display: flex;
  align-items: center;
  gap: 16px;
  padding-left: 27px;
  border: 2px solid #e3e5ea;
  font-size: 28px;
  font-weight: 500;
}

.blue-bar {
  background: #ebf1fe;
}

.blue-bar.light {
  background: #eff5fe;
}

.green-bar {
  background: #edf7ee;
}

.stat-row {
  flex: none;
  height: 219px;
  display: grid;
  grid-template-columns: 1fr 1fr 1fr;
  gap: 21px;
}

.stat-card {
  border: 2px solid #e3e5ea;
}

.stat-cyan {
  background: #e2f4f8;
}

.stat-green {
  background: #e8f7ee;
}

.stat-warn {
  background: linear-gradient(#fdf5e1 44px, #f7ebea 44px);
}

.card-head {
  height: 60px;
  display: flex;
  align-items: center;
  justify-content: space-between;
  padding: 0 22px 0 12px;
}

.stat-card .card-head {
  padding-top: 2px;
}

h3 {
  font-size: 28px;
  font-weight: 500;
}

.stat-value {
  font-size: 134px;
  font-weight: 700;
  line-height: 116px;
  text-align: center;
}

.chart-row {
  flex: none;
  height: 377px;
  display: grid;
  grid-template-columns: 1fr 1fr;
  gap: 22px;
}

.chart-card {
  position: relative;
  background: #fff;
  border: 2px solid #e3e5ea;
}

.plot, .pie {
  display: block;
  flex: none;
}

.grid path {
  fill: none;
  stroke: #f0f1f3;
  stroke-width: 2;
}

.axis-y text {
  font-size: 20px;
  fill: #444;
  text-anchor: end;
}

.axis-x text {
  font-size: 20px;
  fill: #333;
  text-anchor: middle;
}

.series polyline {
  fill: none;
  stroke-width: 4;
  stroke-linejoin: miter;
}

.line-one {
  fill: none;
  stroke-width: 4;
}

.pie-body {
  display: flex;
}

.legend {
  width: 391px;
  margin-left: 22px;
  padding-top: 4px;
  font-family: "DejaVu Sans Mono", "Noto Sans CJK SC", monospace;
  font-size: 24px;
}

.legend-row {
  height: 44px;
  display: flex;
  align-items: center;
}

.legend-row i {
  width: 23px;
  height: 22px;
  flex: none;
  margin-right: 37px;
  border-radius: 4px;
}

.legend-head b {
  font-weight: 700;
}

.legend-num {
  margin-left: auto;
  white-space: pre;
}

.sw-teal {
  background: #328273;
}

.sw-mauve {
  background: #857183;
}

.sw-blue {
  background: #2f6fb0;
}

.legend-bar {
  position: absolute;
  left: 893px;
  top: 70px;
  width: 10px;
  height: 320px;
  border-radius: 5px;
  background: #c6c7ca;
}

/* assistant */
.assistant {
  position: relative;
  width: 835px;
  height: 1465px;
  flex: none;
  margin-left: 18px;
  border: 2px solid #e6e7ec;
  border-right: 0;
  border-radius: 16px;
  background:
    linear-gradient(180deg, rgba(248, 249, 252, 0) 120px, #f8f9fc 300px),
    linear-gradient(100deg, #f9eae2 0%, #f5e6ef 30%, #e8e2f6 50%, #e4e6f8 100%);
  background-color: #f8f9fc;
}

.assist-head {
  height: 127px;
  display: flex;
  align-items: center;
  padding: 2px 41px 0 38px;
}

h2 {
  margin-left: 17px;
  font-size: 40px;
  font-weight: 600;
  color: #222;
}

.assist-tools {
  margin-left: auto;
  display: flex;
  align-items: center;
  gap: 36px;
}

.agent-wrap {
  position: relative;
  height: 102px;
  margin: 0 22px 0 23px;
  border-radius: 16px;
  background: #fafbfd;
}

.agent-card {
  height: 80px;
  display: flex;
  align-items: center;
  padding: 0 27px 0 31px;
  background: #fff;
  border-radius: 16px;
  box-shadow: 0 6px 14px rgba(60, 60, 90, .1);
}

.agent-name {
  margin-left: 20px;
  font-size: 28px;
  font-weight: 600;
}

.agent-arrow {
  margin-left: auto;
}

.advice-card {
  height: 888px;
  margin: 20px 22px 0 24px;
  padding: 26px 30px 0;
  background: #fff;
  border: 2px solid #eff0f4;
  border-radius: 16px;
}

.advice-title {
  display: flex;
  align-items: center;
  gap: 16px;
}

.advice-icon {
  width: 40px;
  height: 40px;
  display: flex;
  align-items: center;
  justify-content: center;
  background: #eef3fe;
  border-radius: 10px;
}

h4 {
  font-size: 28px;
  font-weight: 500;
}

.advice-list {
  list-style: none;
  margin-top: 20px;
  display: flex;
  flex-direction: column;
  gap: 14px;
}

.advice-list li {
  display: flex;
  gap: 21px;
}

.num {
  width: 40px;
  height: 40px;
  flex: none;
  border-radius: 50%;
  background: #eef3fe;
  color: #3161cf;
  font-weight: 700;
  line-height: 40px;
  text-align: center;
}

.advice-list p {
  font-size: 26.300px;
  line-height: 40px;
  white-space: nowrap;
  color: #222c35;
}

.copy-row {
  height: 112px;
  display: flex;
  align-items: center;
  gap: 12px;
  padding: 6px 0 0 24px;
  color: #666;
}

.prompt-box {
  height: 188px;
  margin: 0 22px 0 23px;
  padding: 28px 30px 17px 26px;
  display: flex;
  flex-direction: column;
  justify-content: space-between;
  background: #fff;
  border: 2px solid #dedfe5;
  border-radius: 18px;
  box-shadow: 0 6px 14px rgba(60, 60, 90, .06);
}

.placeholder {
  font-size: 28px;
  line-height: 40px;
  color: #9a9ca3;
}

.prompt-foot {
  display: flex;
  align-items: center;
  justify-content: flex-end;
  gap: 12px;
}

.mode-btn {
  width: 129px;
  height: 63px;
  display: flex;
  align-items: center;
  justify-content: center;
  gap: 8px;
  background: #f5f6fb;
  border: 4px solid #3161cf;
  border-radius: 16px;
  color: #333;
}

.mode-btn .chev {
  color: #333;
}

.mode-menu {
  position: absolute;
  left: 415px;
  top: 917px;
  width: 408px;
  height: 432px;
  padding: 8px;
  background: #fff;
  border-radius: 16px;
  box-shadow: 0 4px 16px rgba(40, 40, 60, .14);
}

.mode-option {
  position: relative;
  height: 104px;
  padding: 14px 24px 0;
  border-radius: 10px;
}

.mode-option.selected {
  background: #f5f5fa;
}

.mode-option strong {
  display: block;
  font-size: 26px;
  font-weight: 600;
  line-height: 38px;
}

.mode-option span {
  display: block;
  margin-top: 2px;
  font-size: 24px;
  line-height: 36px;
  color: #777;
  white-space: nowrap;
}

.mode-check {
  position: absolute;
  right: 26px;
  top: 44px;
}

.mark-box {
  position: absolute;
  left: 408px;
  top: 910px;
  width: 409px;
  height: 528px;
  border: 5px solid #f82c0a;
  pointer-events: none;
}
```
